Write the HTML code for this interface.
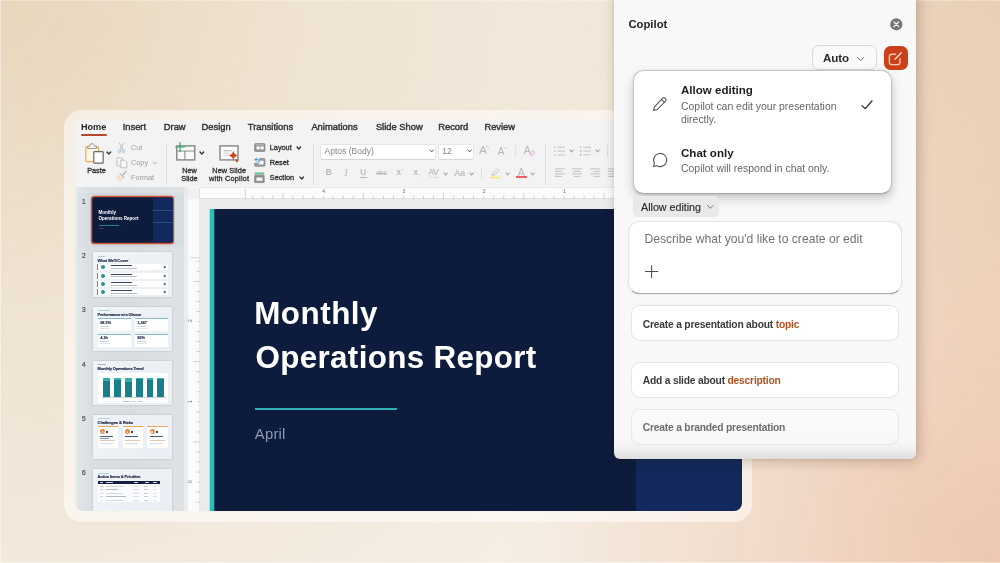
<!DOCTYPE html><html><head><meta charset="utf-8"><title>Copilot in PowerPoint</title><style>
*{box-sizing:border-box;margin:0;padding:0}
html,body{width:1000px;height:563px;overflow:hidden}
body{position:relative;font-family:"Liberation Sans",sans-serif;
 background:
  radial-gradient(circle 760px at 0 0, rgba(229,208,178,0.8) 0, rgba(229,208,178,0.42) 35%, rgba(229,208,178,0) 100%),
  radial-gradient(circle 420px at 1000px 0, rgba(228,204,176,0.7) 0, rgba(228,204,176,0) 100%),
  radial-gradient(circle 500px at 1000px 563px, rgba(236,194,170,0.72) 0, rgba(236,194,170,0.24) 45%, rgba(236,194,170,0) 100%),
  linear-gradient(90deg, rgba(240,211,189,0) 54%, rgba(240,211,189,0.88) 100%),
  #f5eee4;
}
.a{position:absolute}
.t{position:absolute;white-space:nowrap;line-height:1;display:block}
svg{position:absolute;overflow:visible}
</style></head><body><div id="root" style="position:absolute;left:0;top:0;width:1000px;height:563px;will-change:transform">
<div class="a" style="left:0;top:0;width:1000px;height:563px;box-shadow:inset 1px 0 0 rgba(255,250,240,0.55),inset 0 1px 0 rgba(255,250,240,0.35),inset 0 -1px 0 rgba(255,250,240,0.5)"></div>
<div class="a" style="left:64px;top:110px;width:688px;height:412px;border-radius:18px;background:rgba(255,254,252,0.55)"></div>
<div class="a" id="win" style="left:75px;top:117.5px;width:667px;height:393.5px;border-radius:8px;overflow:hidden;background:transparent">
<div class="a" style="left:0;top:0;width:667px;height:70.5px;background:linear-gradient(rgba(243,243,243,0) 0,rgba(243,243,243,0.5) 1.5px,#f3f3f3 3.5px);border-bottom:1px solid #dedede"></div>
<span class="t " style="left:6.00px;top:5.10px;font-size:9.1px;color:#262626;font-weight:bold;">Home</span>
<span class="t " style="left:47.70px;top:5.49px;font-size:9.35px;color:#333;font-weight:normal;-webkit-text-stroke:0.42px #333;">Insert</span>
<span class="t " style="left:88.80px;top:5.49px;font-size:9.35px;color:#333;font-weight:normal;-webkit-text-stroke:0.42px #333;">Draw</span>
<span class="t " style="left:126.60px;top:5.49px;font-size:9.35px;color:#333;font-weight:normal;-webkit-text-stroke:0.42px #333;">Design</span>
<span class="t " style="left:172.80px;top:5.49px;font-size:9.35px;color:#333;font-weight:normal;-webkit-text-stroke:0.42px #333;">Transitions</span>
<span class="t " style="left:236.40px;top:5.49px;font-size:9.35px;color:#333;font-weight:normal;-webkit-text-stroke:0.42px #333;">Animations</span>
<span class="t " style="left:300.90px;top:5.49px;font-size:9.35px;color:#333;font-weight:normal;-webkit-text-stroke:0.42px #333;">Slide Show</span>
<span class="t " style="left:363.20px;top:5.49px;font-size:9.35px;color:#333;font-weight:normal;-webkit-text-stroke:0.42px #333;">Record</span>
<span class="t " style="left:409.40px;top:5.49px;font-size:9.35px;color:#333;font-weight:normal;-webkit-text-stroke:0.42px #333;">Review</span>
<div class="a" style="left:6px;top:16.5px;width:25.5px;height:2px;border-radius:1px;background:#b8472b"></div>
<svg style="left:9.00px;top:24.50px" width="22" height="23" viewBox="0 0 22 23">
<rect x="1.8" y="4.6" width="12.6" height="15" rx="1" fill="#fff6e6" stroke="#efb04e" stroke-width="1.3"/>
<path d="M3.6 6.4 L3.6 5 Q3.6 4.2 4.6 4.2 L5.6 4.2 Q6 1.6 8.1 1.6 Q10.2 1.6 10.6 4.2 L11.6 4.2 Q12.6 4.2 12.6 5 L12.6 6.4 Z" fill="#f7f7f7" stroke="#8a8a8a" stroke-width="0.9"/>
<rect x="9.8" y="9.6" width="9.4" height="11.6" rx="0.8" fill="#fdfdfd" stroke="#6a6a6a" stroke-width="1.2"/>
</svg>
<svg style="left:31.90px;top:34.30px" width="3.7" height="2.1" viewBox="0 0 3.7 2.1"><path d="M0 0 L1.85 2.1 L3.7 0" fill="none" stroke="#2b2b2b" stroke-width="1.25" stroke-linecap="round" stroke-linejoin="round"/></svg>
<span class="t " style="left:12.20px;top:49.32px;font-size:7.3px;color:#2e2e2e;font-weight:normal;-webkit-text-stroke:0.3px currentColor;">Paste</span>
<svg style="left:42.00px;top:24.50px" width="9" height="12" viewBox="0 0 9 12">
<path d="M2.2 0.8 L6.2 8.2 M6.8 0.8 L2.8 8.2" stroke="#b4b4b4" stroke-width="0.9" fill="none" stroke-linecap="round"/>
<ellipse cx="2.4" cy="9.3" rx="1.3" ry="1.6" fill="#dbe7f1" stroke="#a9c0d4" stroke-width="0.8"/>
<ellipse cx="6.6" cy="9.3" rx="1.3" ry="1.6" fill="#dbe7f1" stroke="#a9c0d4" stroke-width="0.8"/>
</svg>
<span class="t " style="left:56.00px;top:26.22px;font-size:7.3px;color:#9c9c9c;font-weight:normal;">Cut</span>
<svg style="left:40.50px;top:39.30px" width="12" height="12" viewBox="0 0 12 12">
<rect x="0.8" y="0.8" width="5.6" height="8" rx="0.6" fill="#f6f6f6" stroke="#bcbcbc" stroke-width="0.9"/>
<path d="M4.8 3.2 L8.6 3.2 L10.8 5.4 L10.8 10.8 L4.8 10.8 Z" fill="#f8f8f8" stroke="#bcbcbc" stroke-width="0.9" stroke-linejoin="round"/>
</svg>
<span class="t " style="left:56.00px;top:41.22px;font-size:7.3px;color:#9c9c9c;font-weight:normal;">Copy</span>
<svg style="left:77.70px;top:44.10px" width="4" height="2.1" viewBox="0 0 4 2.1"><path d="M0 0 L2.0 2.1 L4 0" fill="none" stroke="#b5b5b5" stroke-width="1" stroke-linecap="round" stroke-linejoin="round"/></svg>
<svg style="left:41.00px;top:53.50px" width="12" height="11" viewBox="0 0 12 11">
<path d="M7.2 3.6 L10 0.8" stroke="#b9b9b9" stroke-width="1.6" stroke-linecap="round"/>
<path d="M4.8 3.4 L8 6.4 L4.2 10 L1 7 Z" fill="#f9e4d2" stroke="#efc8a8" stroke-width="0.9" stroke-linejoin="round"/>
<path d="M4.6 3 L8.4 6.6" stroke="#c4c4c4" stroke-width="1.2" stroke-linecap="round"/>
</svg>
<span class="t " style="left:56.00px;top:56.52px;font-size:7.3px;color:#9c9c9c;font-weight:normal;">Format</span>
<div class="a" style="left:91px;top:26.5px;width:1px;height:41px;background:#dddddd"></div>
<svg style="left:99.00px;top:23.50px" width="23" height="21" viewBox="0 0 23 21">
<rect x="2.8" y="4.9" width="17.9" height="14" fill="#fbfbfb" stroke="#8c8c8c" stroke-width="1.5"/>
<path d="M2.8 10 L20.7 10 M10.9 10 L10.9 18.9" stroke="#8c8c8c" stroke-width="1.1" fill="none"/>
<path d="M6.1 1.2 L6.1 11 M1 6 L11.2 6" stroke="#2fa36b" stroke-width="1.2" fill="none"/>
</svg>
<svg style="left:125.10px;top:34.80px" width="3.7" height="2.1" viewBox="0 0 3.7 2.1"><path d="M0 0 L1.85 2.1 L3.7 0" fill="none" stroke="#2b2b2b" stroke-width="1.25" stroke-linecap="round" stroke-linejoin="round"/></svg>
<span class="t " style="left:107.20px;top:49.32px;font-size:7.3px;color:#2e2e2e;font-weight:normal;-webkit-text-stroke:0.3px currentColor;">New</span>
<span class="t " style="left:106.30px;top:57.02px;font-size:7.3px;color:#2e2e2e;font-weight:normal;-webkit-text-stroke:0.3px currentColor;">Slide</span>
<svg style="left:143.00px;top:25.50px" width="23" height="21" viewBox="0 0 23 21">
<rect x="2" y="2.9" width="18" height="14" fill="#fbfbfb" stroke="#8c8c8c" stroke-width="1.5"/>
<path d="M5.5 7.8 L13.6 7.8" stroke="#a8a8a8" stroke-width="0.9"/>
<path d="M5.5 10.2 L11.5 10.2 M5.5 12.5 L10.2 12.5" stroke="#c6c6c6" stroke-width="0.9"/>
<path d="M15.3 7.6 Q15.9 11.6 19.9 12.5 Q15.9 13.4 15.3 17.4 Q14.7 13.4 10.7 12.5 Q14.7 11.6 15.3 7.6 Z" fill="#d2451f"/>
<path d="M18.8 16 L20.4 17.8 L18.8 19.6 L17.2 17.8 Z" fill="#d2451f"/>
</svg>
<span class="t " style="left:137.30px;top:49.32px;font-size:7.3px;color:#2e2e2e;font-weight:normal;-webkit-text-stroke:0.3px currentColor;letter-spacing:0.1px;">New Slide</span>
<span class="t " style="left:134.10px;top:57.02px;font-size:7.3px;color:#2e2e2e;font-weight:normal;-webkit-text-stroke:0.3px currentColor;letter-spacing:0.2px;">with Copilot</span>
<svg style="left:179.30px;top:25.20px" width="12" height="9" viewBox="0 0 12 9">
<rect x="0.6" y="0.6" width="10.4" height="7.8" rx="0.8" fill="#8f8f8f" stroke="#8a8a8a" stroke-width="0.8"/>
<rect x="1.6" y="1.2" width="8.4" height="1.2" fill="#b9b9b9"/>
<rect x="2.5" y="3.4" width="3.2" height="3" fill="#fafafa"/><rect x="6.4" y="3.4" width="3.3" height="3" fill="#fafafa"/>
</svg>
<span class="t " style="left:194.80px;top:26.22px;font-size:7.3px;color:#2e2e2e;font-weight:normal;-webkit-text-stroke:0.3px currentColor;">Layout</span>
<svg style="left:221.90px;top:29.20px" width="3.6" height="2.0" viewBox="0 0 3.6 2.0"><path d="M0 0 L1.8 2.0 L3.6 0" fill="none" stroke="#2b2b2b" stroke-width="1.2" stroke-linecap="round" stroke-linejoin="round"/></svg>
<svg style="left:179.30px;top:39.70px" width="12" height="10" viewBox="0 0 12 10">
<rect x="0.6" y="1.6" width="10.4" height="7.6" rx="0.8" fill="#9a9a9a" stroke="#8a8a8a" stroke-width="0.8"/>
<rect x="4.6" y="3.8" width="5" height="3.6" fill="#fafafa"/>
<rect x="0" y="0" width="5.2" height="5.8" fill="#f3f3f3"/>
<path d="M1.2 2.6 L4 2.6 Q5 2.6 5 3.8 L5 5.6 M2.8 0.8 L1 2.6 L2.8 4.4" stroke="#3c97de" stroke-width="1" fill="none" stroke-linecap="round" stroke-linejoin="round"/>
</svg>
<span class="t " style="left:194.80px;top:41.02px;font-size:7.3px;color:#2e2e2e;font-weight:normal;-webkit-text-stroke:0.3px currentColor;">Reset</span>
<svg style="left:179.30px;top:54.20px" width="12" height="12" viewBox="0 0 12 12">
<rect x="0.6" y="0.4" width="9.6" height="2.2" fill="#6cc596"/>
<rect x="0.6" y="3.2" width="9.6" height="7.4" rx="0.6" fill="#8f8f8f" stroke="#8a8a8a" stroke-width="0.8"/>
<rect x="2.4" y="5.6" width="6" height="3.2" fill="#fafafa"/>
</svg>
<span class="t " style="left:194.80px;top:56.62px;font-size:7.3px;color:#2e2e2e;font-weight:normal;-webkit-text-stroke:0.3px currentColor;">Section</span>
<svg style="left:225.40px;top:59.10px" width="3.5" height="2.0" viewBox="0 0 3.5 2.0"><path d="M0 0 L1.75 2.0 L3.5 0" fill="none" stroke="#2b2b2b" stroke-width="1.2" stroke-linecap="round" stroke-linejoin="round"/></svg>
<div class="a" style="left:238px;top:26.0px;width:1px;height:41px;background:#dddddd"></div>
<div class="a" style="left:245px;top:26.0px;width:116px;height:16px;background:#fff;border:0.6px solid #e6e6e6;border-bottom-color:#d6d6d6;border-radius:2px"></div>
<span class="t " style="left:249.60px;top:29.50px;font-size:8.5px;color:#858585;font-weight:normal;">Aptos (Body)</span>
<svg style="left:354.90px;top:32.80px" width="3.3" height="1.9" viewBox="0 0 3.3 1.9"><path d="M0 0 L1.65 1.9 L3.3 0" fill="none" stroke="#555" stroke-width="1.0" stroke-linecap="round" stroke-linejoin="round"/></svg>
<div class="a" style="left:363px;top:26.0px;width:36px;height:16px;background:#fff;border:0.6px solid #e6e6e6;border-bottom-color:#d6d6d6;border-radius:2px"></div>
<span class="t " style="left:367.20px;top:29.50px;font-size:8.5px;color:#858585;font-weight:normal;">12</span>
<svg style="left:392.70px;top:32.80px" width="3.3" height="1.9" viewBox="0 0 3.3 1.9"><path d="M0 0 L1.65 1.9 L3.3 0" fill="none" stroke="#555" stroke-width="1.0" stroke-linecap="round" stroke-linejoin="round"/></svg>
<span class="t " style="left:404.00px;top:27.41px;font-size:11.8px;color:#b9b9b9;font-weight:normal;">A</span>
<svg style="left:411.00px;top:28.80px" width="3.4" height="2" viewBox="0 0 3.4 2"><path d="M0 1.8 L1.7 0.2 L3.4 1.8" fill="none" stroke="#b9b9b9" stroke-width="0.7"/></svg>
<span class="t " style="left:422.60px;top:28.43px;font-size:10.6px;color:#b9b9b9;font-weight:normal;">A</span>
<svg style="left:429.40px;top:29.50px" width="3.2" height="2" viewBox="0 0 3.2 2"><path d="M0 0.2 L1.6 1.8 L3.2 0.2" fill="none" stroke="#b9b9b9" stroke-width="0.7"/></svg>
<div class="a" style="left:440.20000000000005px;top:27.5px;width:1px;height:12px;background:#dfdfdf"></div>
<span class="t " style="left:448.60px;top:27.92px;font-size:11.2px;color:#b9b9b9;font-weight:normal;">A</span>
<svg style="left:453.50px;top:32.70px" width="7" height="7" viewBox="0 0 7 7"><path d="M3.6 0.6 L6 2.2 L3.2 6 L0.8 4.4 Z" fill="#f7e9f3" stroke="#d9a6cf" stroke-width="0.8" stroke-linejoin="round"/></svg>
<span class="t " style="left:250.60px;top:50.65px;font-size:8.8px;color:#b9b9b9;font-weight:bold;">B</span>
<span class="t " style="left:269.60px;top:50.65px;font-size:8.8px;color:#b9b9b9;font-weight:normal;font-family:'Liberation Serif',serif;font-style:italic;font-size:9.6px;">I</span>
<span class="t " style="left:285.20px;top:50.59px;font-size:8.4px;color:#b9b9b9;font-weight:normal;-webkit-text-stroke:0.2px #b9b9b9;">U</span>
<div class="a" style="left:285px;top:59.0px;width:6.5px;height:0.8px;background:#b9b9b9"></div>
<span class="t " style="left:301.60px;top:52.77px;font-size:6.3px;color:#b9b9b9;font-weight:normal;">abc</span>
<div class="a" style="left:301.2px;top:55.30000000000001px;width:10.6px;height:0.8px;background:#b9b9b9"></div>
<span class="t " style="left:321.60px;top:50.85px;font-size:8.8px;color:#b9b9b9;font-weight:normal;-webkit-text-stroke:0.2px #b9b9b9;">x</span>
<span class="t " style="left:326.20px;top:50.54px;font-size:4.2px;color:#cad9e8;font-weight:normal;">2</span>
<span class="t " style="left:338.60px;top:50.85px;font-size:8.8px;color:#b9b9b9;font-weight:normal;-webkit-text-stroke:0.2px #b9b9b9;">x</span>
<span class="t " style="left:343.60px;top:56.74px;font-size:4.2px;color:#cad9e8;font-weight:normal;">2</span>
<span class="t " style="left:353.40px;top:50.07px;font-size:8.3px;color:#b9b9b9;font-weight:normal;-webkit-text-stroke:0.2px #b9b9b9;">AV</span>
<svg style="left:353.60px;top:58.10px" width="10" height="3" viewBox="0 0 10 3"><path d="M0.4 1.4 L9.2 1.4 M1.8 0.2 L0.4 1.4 L1.8 2.6 M7.8 0.2 L9.2 1.4 L7.8 2.6" fill="none" stroke="#c3d6e7" stroke-width="0.6"/></svg>
<svg style="left:368.80px;top:55.10px" width="3.2" height="1.9" viewBox="0 0 3.2 1.9"><path d="M0 0 L1.6 1.9 L3.2 0" fill="none" stroke="#a2a2a2" stroke-width="1.15" stroke-linecap="round" stroke-linejoin="round"/></svg>
<span class="t " style="left:379.60px;top:51.22px;font-size:8.6px;color:#b9b9b9;font-weight:normal;-webkit-text-stroke:0.2px #b9b9b9;">Aa</span>
<svg style="left:394.60px;top:55.10px" width="3.2" height="1.9" viewBox="0 0 3.2 1.9"><path d="M0 0 L1.6 1.9 L3.2 0" fill="none" stroke="#a2a2a2" stroke-width="1.15" stroke-linecap="round" stroke-linejoin="round"/></svg>
<div class="a" style="left:406.3px;top:50.5px;width:1px;height:11px;background:#dfdfdf"></div>
<svg style="left:414.00px;top:50.50px" width="12" height="11" viewBox="0 0 12 11">
<path d="M8.6 0.8 L10.4 2.4 L5.6 7.2 L3.6 5.6 Z" fill="none" stroke="#bdbdbd" stroke-width="0.8" stroke-linejoin="round"/>
<path d="M3.6 5.8 L5.4 7.4 L3.4 8 L2.6 7.4 Z" fill="#c9c9c9"/>
<rect x="0.6" y="8.8" width="10.8" height="1.6" fill="#f2ec6a"/>
</svg>
<svg style="left:430.60px;top:55.10px" width="3.2" height="1.9" viewBox="0 0 3.2 1.9"><path d="M0 0 L1.6 1.9 L3.2 0" fill="none" stroke="#a2a2a2" stroke-width="1.15" stroke-linecap="round" stroke-linejoin="round"/></svg>
<span class="t " style="left:442.80px;top:49.43px;font-size:10.6px;color:#b9b9b9;font-weight:normal;">A</span>
<div class="a" style="left:441px;top:58.900000000000006px;width:10.6px;height:1.8px;background:#e8636a"></div>
<svg style="left:456.00px;top:55.10px" width="3.2" height="1.9" viewBox="0 0 3.2 1.9"><path d="M0 0 L1.6 1.9 L3.2 0" fill="none" stroke="#a2a2a2" stroke-width="1.15" stroke-linecap="round" stroke-linejoin="round"/></svg>
<div class="a" style="left:469.6px;top:26.0px;width:1px;height:41px;background:#dddddd"></div>
<svg style="left:478.60px;top:28.10px" width="11.4" height="10.4" viewBox="0 0 11.4 10.4">
<rect x="0" y="0.6" width="1.4" height="1.4" fill="#a9c3da"/><rect x="0" y="4.4" width="1.4" height="1.4" fill="#a9c3da"/><rect x="0" y="8.2" width="1.4" height="1.4" fill="#a9c3da"/>
<rect x="3.4" y="0.8" width="7.6" height="1" fill="#c4c4c4"/><rect x="3.4" y="4.6" width="7.6" height="1" fill="#c4c4c4"/><rect x="3.4" y="8.4" width="7.6" height="1" fill="#c4c4c4"/></svg>
<svg style="left:494.80px;top:32.80px" width="3.2" height="1.9" viewBox="0 0 3.2 1.9"><path d="M0 0 L1.6 1.9 L3.2 0" fill="none" stroke="#a2a2a2" stroke-width="1.15" stroke-linecap="round" stroke-linejoin="round"/></svg>
<svg style="left:504.60px;top:28.10px" width="11.4" height="10.4" viewBox="0 0 11.4 10.4">
<rect x="0.4" y="0.2" width="0.8" height="2.2" fill="#a9c3da"/><rect x="0.1" y="4" width="1.3" height="2.2" fill="#a9c3da"/><rect x="0.1" y="7.8" width="1.3" height="2.2" fill="#a9c3da"/>
<rect x="3.4" y="0.8" width="7.6" height="1" fill="#c4c4c4"/><rect x="3.4" y="4.6" width="7.6" height="1" fill="#c4c4c4"/><rect x="3.4" y="8.4" width="7.6" height="1" fill="#c4c4c4"/></svg>
<svg style="left:520.60px;top:32.80px" width="3.2" height="1.9" viewBox="0 0 3.2 1.9"><path d="M0 0 L1.6 1.9 L3.2 0" fill="none" stroke="#a2a2a2" stroke-width="1.15" stroke-linecap="round" stroke-linejoin="round"/></svg>
<div class="a" style="left:532px;top:27.5px;width:1px;height:12px;background:#dfdfdf"></div>
<svg style="left:479.50px;top:50.80px" width="10.2" height="9.4" viewBox="0 0 10.2 9.4"><rect x="0" y="0.4" width="10.2" height="1" fill="#c2c2c2"/><rect x="0" y="2.9" width="7" height="1" fill="#c2c2c2"/><rect x="0" y="5.4" width="10.2" height="1" fill="#c2c2c2"/><rect x="0" y="7.9" width="7" height="1" fill="#c2c2c2"/></svg>
<svg style="left:497.00px;top:50.80px" width="10.2" height="9.4" viewBox="0 0 10.2 9.4"><rect x="0.0" y="0.4" width="10.2" height="1" fill="#c2c2c2"/><rect x="1.5999999999999996" y="2.9" width="7" height="1" fill="#c2c2c2"/><rect x="0.0" y="5.4" width="10.2" height="1" fill="#c2c2c2"/><rect x="1.5999999999999996" y="7.9" width="7" height="1" fill="#c2c2c2"/></svg>
<svg style="left:514.80px;top:50.80px" width="10.2" height="9.4" viewBox="0 0 10.2 9.4"><rect x="0.0" y="0.4" width="10.2" height="1" fill="#c2c2c2"/><rect x="3.1999999999999993" y="2.9" width="7" height="1" fill="#c2c2c2"/><rect x="0.0" y="5.4" width="10.2" height="1" fill="#c2c2c2"/><rect x="3.1999999999999993" y="7.9" width="7" height="1" fill="#c2c2c2"/></svg>
<svg style="left:532.50px;top:50.80px" width="10.2" height="9.4" viewBox="0 0 10.2 9.4"><rect x="0" y="0.4" width="10.2" height="1" fill="#c2c2c2"/><rect x="0" y="2.9" width="10.2" height="1" fill="#c2c2c2"/><rect x="0" y="5.4" width="10.2" height="1" fill="#c2c2c2"/><rect x="0" y="7.9" width="10.2" height="1" fill="#c2c2c2"/></svg>
<div class="a" style="left:0;top:69.69999999999999px;width:112.6px;height:330px;background:#e9ebec"></div>
<div class="a" style="left:2px;top:69.69999999999999px;width:106.6px;height:330px;background:linear-gradient(90deg,#e3e6e8 0,#dcdfe1 12px,#dadddf 50%,#dfe2e4 100%)"></div>
<div class="a" style="left:2px;top:75.9px;width:106.6px;height:53.5px;background:linear-gradient(90deg,#dfe3e6 0,#d2d9dd 18px,#cfd7db 60%,#d8dde0 100%)"></div>
<span class="t " style="left:7.10px;top:81.41px;font-size:6.6px;color:#4c4c4c;font-weight:normal;-webkit-text-stroke:0.2px #4c4c4c;">1</span>
<span class="t " style="left:7.10px;top:135.91px;font-size:6.6px;color:#4c4c4c;font-weight:normal;-webkit-text-stroke:0.2px #4c4c4c;">2</span>
<span class="t " style="left:7.10px;top:189.91px;font-size:6.6px;color:#4c4c4c;font-weight:normal;-webkit-text-stroke:0.2px #4c4c4c;">3</span>
<span class="t " style="left:7.10px;top:244.11px;font-size:6.6px;color:#4c4c4c;font-weight:normal;-webkit-text-stroke:0.2px #4c4c4c;">4</span>
<span class="t " style="left:7.10px;top:298.11px;font-size:6.6px;color:#4c4c4c;font-weight:normal;-webkit-text-stroke:0.2px #4c4c4c;">5</span>
<span class="t " style="left:7.10px;top:352.31px;font-size:6.6px;color:#4c4c4c;font-weight:normal;-webkit-text-stroke:0.2px #4c4c4c;">6</span>
<svg style="left:15.00px;top:77.50px" width="86" height="51" viewBox="0 0 86 51"><rect x="1.55" y="1.55" width="81.9" height="46.9" rx="2.8" fill="#0d1b3c" stroke="#c8553a" stroke-width="1.5"/></svg>
<div class="a" style="left:17.5px;top:80.1px;width:80px;height:44.6px;border-radius:2px;background:#0d1b3c;overflow:hidden"><div class="a" style="left:60px;top:0;width:20px;height:45px;background:#13295b"></div><div class="a" style="left:60px;top:12.2px;width:20px;height:0.7px;background:#234f85"></div><div class="a" style="left:60px;top:24.2px;width:20px;height:0.7px;background:#234f85"></div><span class="t " style="left:6.00px;top:13.35px;font-size:4.55px;color:#fff;font-weight:bold;">Monthly</span><span class="t " style="left:6.00px;top:19.45px;font-size:4.55px;color:#fff;font-weight:bold;">Operations Report</span><div class="a" style="left:6px;top:27.7px;width:20px;height:0.6px;background:#277f8d"></div><span class="t " style="left:6.00px;top:30.37px;font-size:2.4px;color:#8b97ad;font-weight:normal;">April</span></div>
<div class="a" style="left:18px;top:134.9px;width:79.3px;height:44.2px;background:linear-gradient(135deg,#f1f4f8,#e9eef4);box-shadow:0 0 1.5px rgba(120,130,140,0.5);overflow:hidden"><div class="a" style="left:4.6px;top:3.7px;width:7.6px;height:0.7px;background:#b4d2d6"></div><span class="t " style="left:4.60px;top:6.91px;font-size:4.0px;color:#14203f;font-weight:bold;-webkit-text-stroke:0.12px #14203f;letter-spacing:-0.12px;">What We'll Cover</span><div class="a" style="left:4px;top:11.8px;width:70.6px;height:6.2px;background:#fff;border-left:0.7px solid #3a9aa0"></div><div class="a" style="left:7.8px;top:12.9px;width:4px;height:4px;border-radius:2px;background:#2c8f96"></div><div class="a" style="left:18px;top:13.0px;width:21px;height:1px;background:#394263"></div><div class="a" style="left:18px;top:15.5px;width:26px;height:0.7px;background:#b6bcc8"></div><div class="a" style="left:70.6px;top:14.0px;width:1.6px;height:1.6px;background:#4d5670;transform:rotate(45deg)"></div><div class="a" style="left:4px;top:20.2px;width:70.6px;height:6.2px;background:#fff;border-left:0.7px solid #3a9aa0"></div><div class="a" style="left:7.8px;top:21.3px;width:4px;height:4px;border-radius:2px;background:#2c8f96"></div><div class="a" style="left:18px;top:21.4px;width:21px;height:1px;background:#394263"></div><div class="a" style="left:18px;top:23.9px;width:26px;height:0.7px;background:#b6bcc8"></div><div class="a" style="left:70.6px;top:22.4px;width:1.6px;height:1.6px;background:#4d5670;transform:rotate(45deg)"></div><div class="a" style="left:4px;top:28.6px;width:70.6px;height:6.2px;background:#fff;border-left:0.7px solid #3a9aa0"></div><div class="a" style="left:7.8px;top:29.700000000000003px;width:4px;height:4px;border-radius:2px;background:#2c8f96"></div><div class="a" style="left:18px;top:29.8px;width:21px;height:1px;background:#394263"></div><div class="a" style="left:18px;top:32.300000000000004px;width:26px;height:0.7px;background:#b6bcc8"></div><div class="a" style="left:70.6px;top:30.8px;width:1.6px;height:1.6px;background:#4d5670;transform:rotate(45deg)"></div><div class="a" style="left:4px;top:36.9px;width:70.6px;height:6.2px;background:#fff;border-left:0.7px solid #3a9aa0"></div><div class="a" style="left:7.8px;top:38.0px;width:4px;height:4px;border-radius:2px;background:#2c8f96"></div><div class="a" style="left:18px;top:38.1px;width:21px;height:1px;background:#394263"></div><div class="a" style="left:18px;top:40.6px;width:26px;height:0.7px;background:#b6bcc8"></div><div class="a" style="left:70.6px;top:39.1px;width:1.6px;height:1.6px;background:#4d5670;transform:rotate(45deg)"></div></div>
<div class="a" style="left:18px;top:189.0px;width:79.3px;height:44.2px;background:linear-gradient(135deg,#f1f4f8,#e9eef4);box-shadow:0 0 1.5px rgba(120,130,140,0.5);overflow:hidden"><div class="a" style="left:4.6px;top:3.3px;width:12.6px;height:0.7px;background:#b4d2d6"></div><span class="t " style="left:4.60px;top:6.81px;font-size:4.0px;color:#14203f;font-weight:bold;-webkit-text-stroke:0.12px #14203f;letter-spacing:-0.15px;">Performance at a Glance</span><div class="a" style="left:4.6px;top:11.4px;width:33px;height:13.2px;background:#fff;border-top:0.9px solid #86bcc4"></div><span class="t " style="left:7.20px;top:14.10px;font-size:3.9px;color:#14203f;font-weight:bold;-webkit-text-stroke:0.12px #14203f;">98.5%</span><div class="a" style="left:7.199999999999999px;top:19.0px;width:9px;height:0.6px;background:#cdd2db"></div><div class="a" style="left:7.199999999999999px;top:21.200000000000003px;width:9.6px;height:0.5px;background:#e2e5eb"></div><div class="a" style="left:41.6px;top:11.4px;width:33px;height:13.2px;background:#fff;border-top:0.9px solid #86bcc4"></div><span class="t " style="left:44.20px;top:14.10px;font-size:3.9px;color:#14203f;font-weight:bold;-webkit-text-stroke:0.12px #14203f;">1,247</span><div class="a" style="left:44.2px;top:19.0px;width:9px;height:0.6px;background:#cdd2db"></div><div class="a" style="left:44.2px;top:21.200000000000003px;width:9.6px;height:0.5px;background:#e2e5eb"></div><div class="a" style="left:4.6px;top:27px;width:33px;height:13.2px;background:#fff;border-top:0.9px solid #86bcc4"></div><span class="t " style="left:7.20px;top:29.70px;font-size:3.9px;color:#14203f;font-weight:bold;-webkit-text-stroke:0.12px #14203f;">4.2h</span><div class="a" style="left:7.199999999999999px;top:34.6px;width:9px;height:0.6px;background:#cdd2db"></div><div class="a" style="left:7.199999999999999px;top:36.8px;width:9.6px;height:0.5px;background:#e2e5eb"></div><div class="a" style="left:41.6px;top:27px;width:33px;height:13.2px;background:#fff;border-top:0.9px solid #86bcc4"></div><span class="t " style="left:44.20px;top:29.70px;font-size:3.9px;color:#14203f;font-weight:bold;-webkit-text-stroke:0.12px #14203f;">92%</span><div class="a" style="left:44.2px;top:34.6px;width:9px;height:0.6px;background:#cdd2db"></div><div class="a" style="left:44.2px;top:36.8px;width:9.6px;height:0.5px;background:#e2e5eb"></div></div>
<div class="a" style="left:18px;top:243.5px;width:79.3px;height:44.2px;background:linear-gradient(135deg,#f1f4f8,#e9eef4);box-shadow:0 0 1.5px rgba(120,130,140,0.5);overflow:hidden"><div class="a" style="left:4.6px;top:3.3px;width:8px;height:0.7px;background:#a8b4c4"></div><span class="t " style="left:4.60px;top:5.91px;font-size:4.0px;color:#14203f;font-weight:bold;-webkit-text-stroke:0.12px #14203f;letter-spacing:-0.15px;">Monthly Operations Trend</span><div class="a" style="left:4.6px;top:11.6px;width:70px;height:30.6px;background:#fff"></div><div class="a" style="left:10.2px;top:16.8px;width:6.8px;height:19.4px;background:#1b7e8b"></div><div class="a" style="left:10.2px;top:16.8px;width:6.8px;height:3px;background:#2fb3a8"></div><div class="a" style="left:21.2px;top:16.8px;width:6.8px;height:19.4px;background:#1b7e8b"></div><div class="a" style="left:21.2px;top:16.8px;width:6.8px;height:1.8px;background:#2fb3a8"></div><div class="a" style="left:32px;top:16.8px;width:6.8px;height:19.4px;background:#1b7e8b"></div><div class="a" style="left:32px;top:16.8px;width:6.8px;height:4.6px;background:#2fb3a8"></div><div class="a" style="left:42.8px;top:16.8px;width:6.8px;height:19.4px;background:#1b7e8b"></div><div class="a" style="left:42.8px;top:16.8px;width:6.8px;height:1px;background:#2fb3a8"></div><div class="a" style="left:53.6px;top:16.8px;width:6.8px;height:19.4px;background:#1b7e8b"></div><div class="a" style="left:53.6px;top:16.8px;width:6.8px;height:1.8px;background:#2fb3a8"></div><div class="a" style="left:64.4px;top:16.8px;width:6.8px;height:19.4px;background:#1b7e8b"></div><div class="a" style="left:64.4px;top:16.8px;width:6.8px;height:0.6px;background:#2fb3a8"></div><div class="a" style="left:8.6px;top:36.2px;width:64px;height:0.5px;background:#c9ced6"></div><div class="a" style="left:30px;top:39.6px;width:7px;height:0.7px;background:#b9c6cc"></div><div class="a" style="left:38.4px;top:39.6px;width:5px;height:0.7px;background:#d5dae0"></div><div class="a" style="left:45px;top:39.6px;width:5px;height:0.7px;background:#c5ccd2"></div></div>
<div class="a" style="left:18px;top:297.5px;width:79.3px;height:44.2px;background:linear-gradient(135deg,#f1f4f8,#e9eef4);box-shadow:0 0 1.5px rgba(120,130,140,0.5);overflow:hidden"><div class="a" style="left:4.6px;top:3.3px;width:12.4px;height:0.7px;background:#b4d2d6"></div><span class="t " style="left:4.60px;top:5.91px;font-size:4.0px;color:#14203f;font-weight:bold;-webkit-text-stroke:0.12px #14203f;letter-spacing:-0.1px;">Challenges &amp; Risks</span><div class="a" style="left:4.6px;top:11.4px;width:20.8px;height:21.2px;background:#fff;border-top:0.9px solid #f0a765"></div><div class="a" style="left:7.0px;top:14.2px;width:4.8px;height:4.8px;border-radius:2.4px;background:#e8853a"></div><div class="a" style="left:8.6px;top:15.6px;width:1.6px;height:2px;background:#fde1c8"></div><div class="a" style="left:13.4px;top:15.8px;width:1.4px;height:1.8px;background:#3a4460"></div><div class="a" style="left:7.199999999999999px;top:21.4px;width:12.6px;height:1px;background:#4c5672"></div><div class="a" style="left:7.199999999999999px;top:25.2px;width:15px;height:0.6px;background:#e6c6ad"></div><div class="a" style="left:7.199999999999999px;top:27.6px;width:13px;height:0.6px;background:#d9dde6"></div><div class="a" style="left:29.6px;top:11.4px;width:20.8px;height:21.2px;background:#fff;border-top:0.9px solid #f0a765"></div><div class="a" style="left:32.0px;top:14.2px;width:4.8px;height:4.8px;border-radius:2.4px;background:#e8853a"></div><div class="a" style="left:33.6px;top:15.6px;width:1.6px;height:2px;background:#fde1c8"></div><div class="a" style="left:38.400000000000006px;top:15.8px;width:1.4px;height:1.8px;background:#3a4460"></div><div class="a" style="left:32.2px;top:21.4px;width:12.6px;height:1px;background:#4c5672"></div><div class="a" style="left:32.2px;top:25.2px;width:15px;height:0.6px;background:#e6c6ad"></div><div class="a" style="left:32.2px;top:27.6px;width:13px;height:0.6px;background:#d9dde6"></div><div class="a" style="left:54.4px;top:11.4px;width:20.8px;height:21.2px;background:#fff;border-top:0.9px solid #f0a765"></div><div class="a" style="left:56.8px;top:14.2px;width:4.8px;height:4.8px;border-radius:2.4px;background:#e8853a"></div><div class="a" style="left:58.4px;top:15.6px;width:1.6px;height:2px;background:#fde1c8"></div><div class="a" style="left:63.2px;top:15.8px;width:1.4px;height:1.8px;background:#3a4460"></div><div class="a" style="left:57.0px;top:21.4px;width:12.6px;height:1px;background:#4c5672"></div><div class="a" style="left:57.0px;top:25.2px;width:15px;height:0.6px;background:#e6c6ad"></div><div class="a" style="left:57.0px;top:27.6px;width:13px;height:0.6px;background:#d9dde6"></div><div class="a" style="left:7.2px;top:22.9px;width:8.6px;height:0.9px;background:#8a90b8"></div></div>
<div class="a" style="left:18px;top:351.5px;width:79.3px;height:44.2px;background:linear-gradient(135deg,#f1f4f8,#e9eef4);box-shadow:0 0 1.5px rgba(120,130,140,0.5);overflow:hidden"><div class="a" style="left:4.6px;top:3.5px;width:11.6px;height:0.7px;background:#b4d2d6"></div><span class="t " style="left:4.60px;top:6.21px;font-size:4.0px;color:#14203f;font-weight:bold;-webkit-text-stroke:0.12px #14203f;letter-spacing:-0.15px;">Action Items &amp; Priorities</span><div class="a" style="left:4.6px;top:12px;width:62.2px;height:2.9px;background:#13203f"></div><div class="a" style="left:6.6px;top:13.1px;width:3px;height:0.7px;background:#c9d0de"></div><div class="a" style="left:12.6px;top:13.1px;width:7px;height:0.7px;background:#c9d0de"></div><div class="a" style="left:41.4px;top:13.1px;width:4px;height:0.7px;background:#c9d0de"></div><div class="a" style="left:52px;top:13.1px;width:4px;height:0.7px;background:#c9d0de"></div><div class="a" style="left:60.2px;top:13.1px;width:3.6px;height:0.7px;background:#c9d0de"></div><div class="a" style="left:4.6px;top:14.9px;width:62.2px;height:18.4px;background:#fbfcfe"></div><div class="a" style="left:7.4px;top:16.6px;width:2.8px;height:0.7px;background:#efb0b0"></div><div class="a" style="left:12.6px;top:16.6px;width:18px;height:0.7px;background:#d3d7df"></div><div class="a" style="left:40px;top:16.6px;width:5.6px;height:0.7px;background:#dadde4"></div><div class="a" style="left:51.4px;top:16.6px;width:3.6px;height:0.7px;background:#c6cad4"></div><div class="a" style="left:59.6px;top:16.6px;width:4.6px;height:0.7px;background:#e0e3e9"></div><div class="a" style="left:7.4px;top:20px;width:2.8px;height:0.7px;background:#c9cdd6"></div><div class="a" style="left:12.6px;top:20px;width:12.6px;height:0.7px;background:#b3b8c5"></div><div class="a" style="left:40px;top:20px;width:5.6px;height:0.7px;background:#dadde4"></div><div class="a" style="left:51.4px;top:20px;width:3.6px;height:0.7px;background:#c6cad4"></div><div class="a" style="left:59.6px;top:20px;width:4.6px;height:0.7px;background:#e0e3e9"></div><div class="a" style="left:7.4px;top:23.6px;width:2.8px;height:0.7px;background:#f5d2c2"></div><div class="a" style="left:12.6px;top:23.6px;width:17.4px;height:0.7px;background:#d3d7df"></div><div class="a" style="left:40px;top:23.6px;width:5.6px;height:0.7px;background:#dadde4"></div><div class="a" style="left:51.4px;top:23.6px;width:3.6px;height:0.7px;background:#c6cad4"></div><div class="a" style="left:59.6px;top:23.6px;width:4.6px;height:0.7px;background:#e0e3e9"></div><div class="a" style="left:7.4px;top:27.2px;width:2.8px;height:0.7px;background:#c9cdd6"></div><div class="a" style="left:12.6px;top:27.2px;width:20.4px;height:0.7px;background:#b3b8c5"></div><div class="a" style="left:40px;top:27.2px;width:5.6px;height:0.7px;background:#dadde4"></div><div class="a" style="left:51.4px;top:27.2px;width:3.6px;height:0.7px;background:#c6cad4"></div><div class="a" style="left:59.6px;top:27.2px;width:4.6px;height:0.7px;background:#e0e3e9"></div><div class="a" style="left:7.4px;top:30.6px;width:2.8px;height:0.7px;background:#e4e7ec"></div><div class="a" style="left:12.6px;top:30.6px;width:17.6px;height:0.7px;background:#d3d7df"></div><div class="a" style="left:40px;top:30.6px;width:5.6px;height:0.7px;background:#dadde4"></div><div class="a" style="left:51.4px;top:30.6px;width:3.6px;height:0.7px;background:#c6cad4"></div><div class="a" style="left:59.6px;top:30.6px;width:4.6px;height:0.7px;background:#e0e3e9"></div></div>
<div class="a" style="left:112.6px;top:69.69999999999999px;width:600px;height:330px;background:#ebebeb"></div>
<div class="a" style="left:112.6px;top:69.69999999999999px;width:12.2px;height:330px;background:#fbfbfb;border-right:0.6px solid #e9e9e9"></div>
<div class="a" style="left:112.6px;top:70.29999999999998px;width:600px;height:11.4px;background:#fcfcfc;border-bottom:0.6px solid #e2e2e2"></div>
<div class="a" style="left:112.6px;top:70.29999999999998px;width:12px;height:11.4px;background:#f1f1f1;border-right:0.6px solid #e0e0e0"></div>
<span class="t " style="left:488.10px;top:71.87px;font-size:5px;color:#6e6e6e;font-weight:normal;">1</span>
<span class="t " style="left:407.80px;top:71.87px;font-size:5px;color:#6e6e6e;font-weight:normal;">2</span>
<span class="t " style="left:327.50px;top:71.87px;font-size:5px;color:#6e6e6e;font-weight:normal;">3</span>
<span class="t " style="left:247.20px;top:71.87px;font-size:5px;color:#6e6e6e;font-weight:normal;">4</span>
<svg style="left:0;top:0" width="667" height="394"><rect x="558.86" y="77.70" width="0.8" height="3.6" fill="#c6c6c6"/><rect x="548.82" y="77.70" width="0.8" height="3.6" fill="#c6c6c6"/><rect x="538.79" y="77.70" width="0.8" height="3.6" fill="#c6c6c6"/><rect x="528.75" y="75.10" width="0.8" height="6.2" fill="#c6c6c6"/><rect x="518.71" y="77.70" width="0.8" height="3.6" fill="#c6c6c6"/><rect x="508.67" y="77.70" width="0.8" height="3.6" fill="#c6c6c6"/><rect x="498.64" y="77.70" width="0.8" height="3.6" fill="#c6c6c6"/><rect x="488.60" y="78.10" width="0.8" height="3.2" fill="#c6c6c6"/><rect x="478.56" y="77.70" width="0.8" height="3.6" fill="#c6c6c6"/><rect x="468.52" y="77.70" width="0.8" height="3.6" fill="#c6c6c6"/><rect x="458.49" y="77.70" width="0.8" height="3.6" fill="#c6c6c6"/><rect x="448.45" y="75.10" width="0.8" height="6.2" fill="#c6c6c6"/><rect x="438.41" y="77.70" width="0.8" height="3.6" fill="#c6c6c6"/><rect x="428.38" y="77.70" width="0.8" height="3.6" fill="#c6c6c6"/><rect x="418.34" y="77.70" width="0.8" height="3.6" fill="#c6c6c6"/><rect x="408.30" y="78.10" width="0.8" height="3.2" fill="#c6c6c6"/><rect x="398.26" y="77.70" width="0.8" height="3.6" fill="#c6c6c6"/><rect x="388.23" y="77.70" width="0.8" height="3.6" fill="#c6c6c6"/><rect x="378.19" y="77.70" width="0.8" height="3.6" fill="#c6c6c6"/><rect x="368.15" y="75.10" width="0.8" height="6.2" fill="#c6c6c6"/><rect x="358.11" y="77.70" width="0.8" height="3.6" fill="#c6c6c6"/><rect x="348.07" y="77.70" width="0.8" height="3.6" fill="#c6c6c6"/><rect x="338.04" y="77.70" width="0.8" height="3.6" fill="#c6c6c6"/><rect x="328.00" y="78.10" width="0.8" height="3.2" fill="#c6c6c6"/><rect x="317.96" y="77.70" width="0.8" height="3.6" fill="#c6c6c6"/><rect x="307.93" y="77.70" width="0.8" height="3.6" fill="#c6c6c6"/><rect x="297.89" y="77.70" width="0.8" height="3.6" fill="#c6c6c6"/><rect x="287.85" y="75.10" width="0.8" height="6.2" fill="#c6c6c6"/><rect x="277.81" y="77.70" width="0.8" height="3.6" fill="#c6c6c6"/><rect x="267.77" y="77.70" width="0.8" height="3.6" fill="#c6c6c6"/><rect x="257.74" y="77.70" width="0.8" height="3.6" fill="#c6c6c6"/><rect x="247.70" y="78.10" width="0.8" height="3.2" fill="#c6c6c6"/><rect x="237.66" y="77.70" width="0.8" height="3.6" fill="#c6c6c6"/><rect x="227.62" y="77.70" width="0.8" height="3.6" fill="#c6c6c6"/><rect x="217.59" y="77.70" width="0.8" height="3.6" fill="#c6c6c6"/><rect x="207.55" y="75.10" width="0.8" height="6.2" fill="#c6c6c6"/><rect x="197.51" y="77.70" width="0.8" height="3.6" fill="#c6c6c6"/><rect x="187.47" y="77.70" width="0.8" height="3.6" fill="#c6c6c6"/><rect x="177.44" y="77.70" width="0.8" height="3.6" fill="#c6c6c6"/><rect x="169.90" y="70.70" width="0.8" height="10.6" fill="#c6c6c6"/></svg>
<span class="t" style="left:114.40px;top:361.50px;font-size:5px;color:#6e6e6e;transform:rotate(-90deg);transform-origin:50% 50%">0</span>
<span class="t" style="left:114.40px;top:281.20px;font-size:5px;color:#6e6e6e;transform:rotate(-90deg);transform-origin:50% 50%">1</span>
<span class="t" style="left:114.40px;top:200.90px;font-size:5px;color:#6e6e6e;transform:rotate(-90deg);transform-origin:50% 50%">2</span>
<svg style="left:0;top:0" width="667" height="394"><rect x="121.40" y="383.78" width="3.4" height="0.8" fill="#c8c8c8"/><rect x="121.40" y="373.74" width="3.4" height="0.8" fill="#c8c8c8"/><rect x="122.40" y="363.70" width="2.4" height="0.8" fill="#c8c8c8"/><rect x="121.40" y="353.66" width="3.4" height="0.8" fill="#c8c8c8"/><rect x="121.40" y="343.63" width="3.4" height="0.8" fill="#c8c8c8"/><rect x="121.40" y="333.59" width="3.4" height="0.8" fill="#c8c8c8"/><rect x="118.40" y="323.55" width="6.4" height="0.8" fill="#c8c8c8"/><rect x="121.40" y="313.51" width="3.4" height="0.8" fill="#c8c8c8"/><rect x="121.40" y="303.48" width="3.4" height="0.8" fill="#c8c8c8"/><rect x="121.40" y="293.44" width="3.4" height="0.8" fill="#c8c8c8"/><rect x="122.40" y="283.40" width="2.4" height="0.8" fill="#c8c8c8"/><rect x="121.40" y="273.36" width="3.4" height="0.8" fill="#c8c8c8"/><rect x="121.40" y="263.33" width="3.4" height="0.8" fill="#c8c8c8"/><rect x="121.40" y="253.29" width="3.4" height="0.8" fill="#c8c8c8"/><rect x="118.40" y="243.25" width="6.4" height="0.8" fill="#c8c8c8"/><rect x="121.40" y="233.21" width="3.4" height="0.8" fill="#c8c8c8"/><rect x="121.40" y="223.18" width="3.4" height="0.8" fill="#c8c8c8"/><rect x="121.40" y="213.14" width="3.4" height="0.8" fill="#c8c8c8"/><rect x="122.40" y="203.10" width="2.4" height="0.8" fill="#c8c8c8"/><rect x="121.40" y="193.06" width="3.4" height="0.8" fill="#c8c8c8"/><rect x="121.40" y="183.03" width="3.4" height="0.8" fill="#c8c8c8"/><rect x="121.40" y="172.99" width="3.4" height="0.8" fill="#c8c8c8"/><rect x="118.40" y="162.95" width="6.4" height="0.8" fill="#c8c8c8"/><rect x="121.40" y="152.91" width="3.4" height="0.8" fill="#c8c8c8"/><rect x="121.40" y="142.88" width="3.4" height="0.8" fill="#c8c8c8"/><rect x="115.40" y="139.30" width="9.6" height="0.8" fill="#cfcfcf"/></svg>
<div class="a" style="left:139px;top:91.5px;width:540px;height:310px;background:#0d1b3c"></div>
<svg style="left:134.00px;top:91.50px" width="8" height="310" viewBox="0 0 8 310"><rect x="0.7" y="0" width="4.6" height="310" fill="#2cc0b4"/></svg>
<div class="a" style="left:560.8px;top:91.5px;width:120px;height:310px;background:#13295b"></div>
<span class="t " style="left:179.20px;top:180.22px;font-size:31.4px;color:#fff;font-weight:bold;letter-spacing:0.5px;">Monthly</span>
<span class="t " style="left:180.60px;top:224.02px;font-size:31.4px;color:#fff;font-weight:bold;letter-spacing:0.31px;">Operations Report</span>
<div class="a" style="left:180.4px;top:290.0px;width:142px;height:2.3px;background:#2fb0b5"></div>
<span class="t " style="left:179.80px;top:309.47px;font-size:14.8px;color:#8d9bb4;font-weight:normal;letter-spacing:0.25px;">April</span>
</div>
<div class="a" id="panel" style="left:614px;top:-10px;width:302px;height:469px;border-radius:0 0 6px 6px;background:linear-gradient(#f8f8f8 0,#f8f8f8 448px,#f1f1f1 458px,#dddddd 469px);box-shadow:2px 2px 13px rgba(40,25,10,0.24),0 0 3px rgba(40,25,10,0.09)"></div>
<div class="a" style="left:614px;top:0;width:302px;height:459px">
<span class="t " style="left:14.40px;top:18.83px;font-size:11.3px;color:#1f1f1f;font-weight:bold;">Copilot</span>
<svg style="left:276.00px;top:18.00px" width="12.6" height="12.6" viewBox="0 0 12.6 12.6"><circle cx="6.3" cy="6.3" r="6.1" fill="#757575"/><path d="M3.9 3.9 L8.7 8.7 M8.7 3.9 L3.9 8.7" stroke="#fff" stroke-width="1.15" stroke-linecap="round"/></svg>
<div class="a" style="left:198px;top:44.6px;width:64.6px;height:25.8px;border:1px solid #d8d8d8;border-radius:6.5px;background:#fafafa"></div>
<span class="t " style="left:209.00px;top:51.88px;font-size:11.6px;color:#2a2a2a;font-weight:bold;letter-spacing:-0.1px;">Auto</span>
<svg style="left:242.60px;top:56.60px" width="7.2" height="4.4" viewBox="0 0 7.2 4.4"><path d="M0.5 0.5 L3.6 3.7 L6.7 0.5" fill="none" stroke="#666" stroke-width="1" stroke-linecap="round" stroke-linejoin="round"/></svg>
<div class="a" style="left:270px;top:46px;width:24px;height:24px;border-radius:6.5px;background:#cb3f19"></div>
<svg style="left:274.40px;top:50.50px" width="15" height="15" viewBox="0 0 15 15">
<path d="M7.4 3.2 L3.8 3.2 Q1.4 3.2 1.4 5.6 L1.4 11.2 Q1.4 13.6 3.8 13.6 L9.6 13.6 Q12 13.6 12 11.2 L12 7.8" fill="none" stroke="#ffc6b3" stroke-width="1.45" stroke-linecap="round"/>
<path d="M13.3 1.7 L6.9 8.2" fill="none" stroke="#fff0ea" stroke-width="1.25" stroke-linecap="round"/>
</svg>
<div class="a" style="left:19px;top:70px;width:259px;height:124px;border:1px solid #c4c4c4;border-bottom-color:#a6a6a6;border-radius:10.5px;background:#fff;box-shadow:0 5px 11px rgba(0,0,0,0.18),0 1px 3px rgba(0,0,0,0.10)"></div>
<svg style="left:38.00px;top:96.00px" width="16" height="16" viewBox="0 0 16 16">
<path d="M10.4 2.3 Q11.9 0.8 13.4 2.3 Q14.9 3.8 13.4 5.3 L5.2 13.5 L1.6 14.4 L2.5 10.8 Z" fill="none" stroke="#505050" stroke-width="1.05" stroke-linejoin="round"/>
<path d="M9.4 3.4 L12.4 6.4" stroke="#505050" stroke-width="1.05"/>
</svg>
<span class="t " style="left:67.00px;top:84.52px;font-size:11.55px;color:#1d1d1d;font-weight:bold;">Allow editing</span>
<span class="t " style="left:67.00px;top:101.65px;font-size:10.45px;color:#666;font-weight:normal;">Copilot can edit your presentation</span>
<span class="t " style="left:67.00px;top:115.45px;font-size:10.45px;color:#666;font-weight:normal;">directly.</span>
<svg style="left:247.00px;top:99.60px" width="12" height="10" viewBox="0 0 12 10"><path d="M1 5.6 L4.2 8.6 L11 1" fill="none" stroke="#2a2a2a" stroke-width="1.3" stroke-linecap="round" stroke-linejoin="round"/></svg>
<svg style="left:38.00px;top:152.00px" width="16" height="16" viewBox="0 0 16 16">
<path d="M8.2 1.4 A6.6 6.6 0 1 1 4.9 13.7 L1.5 14.6 L2.5 11.3 A6.6 6.6 0 0 1 8.2 1.4 Z" fill="none" stroke="#505050" stroke-width="1.05" stroke-linejoin="round"/>
</svg>
<span class="t " style="left:67.00px;top:147.52px;font-size:11.55px;color:#1d1d1d;font-weight:bold;">Chat only</span>
<span class="t " style="left:67.00px;top:164.05px;font-size:10.45px;color:#666;font-weight:normal;">Copilot will respond in chat only.</span>
<div class="a" style="left:19.299999999999955px;top:196.4px;width:85.4px;height:20.4px;border-radius:5px;background:#e9e9e9"></div>
<span class="t " style="left:27.00px;top:202.04px;font-size:10.7px;color:#2b2b2b;font-weight:normal;-webkit-text-stroke:0.15px #2b2b2b;">Allow editing</span>
<svg style="left:92.60px;top:205.00px" width="6.6" height="4" viewBox="0 0 6.6 4"><path d="M0.5 0.5 L3.3 3.3 L6.1 0.5" fill="none" stroke="#666" stroke-width="0.9" stroke-linecap="round" stroke-linejoin="round"/></svg>
<div class="a" style="left:14px;top:221px;width:274px;height:73px;border:1px solid #e3e3e3;border-bottom-color:#a9a9a9;border-radius:11.5px;background:#fff;box-shadow:0 1px 2px rgba(0,0,0,0.05)"></div>
<span class="t " style="left:30.40px;top:232.92px;font-size:12.15px;color:#737373;font-weight:normal;">Describe what you'd like to create or edit</span>
<svg style="left:30.80px;top:265.30px" width="13.2" height="13.2" viewBox="0 0 13.2 13.2"><path d="M6.6 0.4 L6.6 12.8 M0.4 6.6 L12.8 6.6" stroke="#4d4d4d" stroke-width="1.05" stroke-linecap="round"/></svg>
<div class="a" style="left:17.399999999999977px;top:305.3px;width:267.4px;height:36px;border:1px solid #e4e4e4;border-radius:9px;background:#fff;opacity:1"></div>
<span class="t " style="left:28.80px;top:319.58px;font-size:10.3px;color:#3b3b3b;font-weight:bold;letter-spacing:-0.22px;">Create a presentation about <span style="color:#b4511f">topic</span></span>
<div class="a" style="left:17.399999999999977px;top:362px;width:267.4px;height:35.8px;border:1px solid #e4e4e4;border-radius:9px;background:#fff;opacity:1"></div>
<span class="t " style="left:28.80px;top:375.68px;font-size:10.3px;color:#3b3b3b;font-weight:bold;letter-spacing:-0.22px;">Add a slide about <span style="color:#b4511f">description</span></span>
<div class="a" style="left:17.399999999999977px;top:409.2px;width:267.4px;height:35.8px;border:1px solid #e6e6e6;border-radius:9px;background:linear-gradient(#fbfbfb,#f7f7f7)"></div>
<span class="t " style="left:28.80px;top:422.78px;font-size:10.3px;color:#6d6d6d;font-weight:bold;letter-spacing:-0.22px;">Create a branded presentation</span>
</div>
</div></body></html>
